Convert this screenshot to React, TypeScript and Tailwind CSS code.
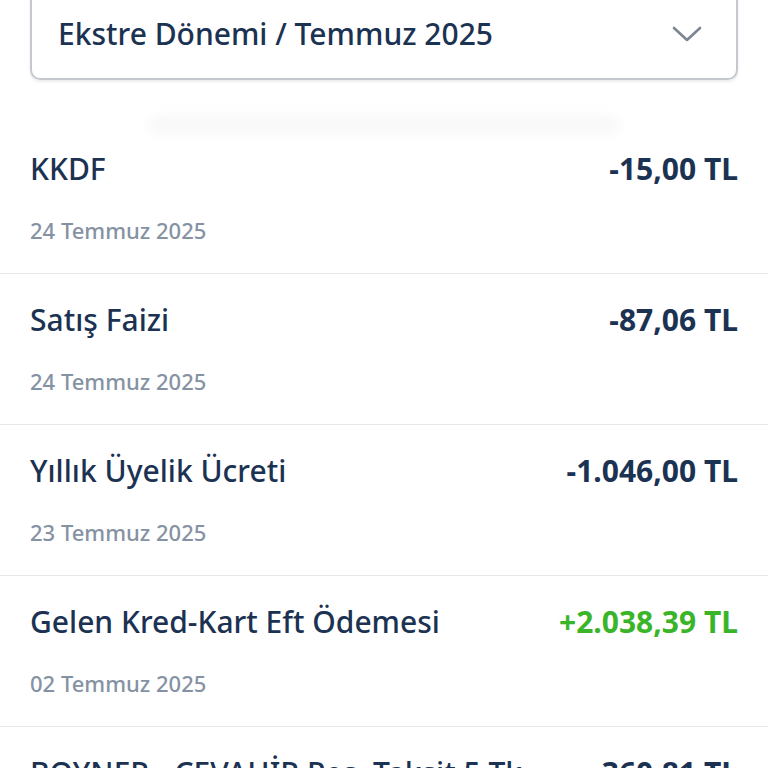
import React from "react";

type Row = { title: string; date: string; amount: string; positive?: boolean };

const rows: Row[] = [
  { title: "KKDF", date: "24 Temmuz 2025", amount: "-15,00 TL" },
  { title: "Satış Faizi", date: "24 Temmuz 2025", amount: "-87,06 TL" },
  { title: "Yıllık Üyelik Ücreti", date: "23 Temmuz 2025", amount: "-1.046,00 TL" },
  { title: "Gelen Kred-Kart Eft Ödemesi", date: "02 Temmuz 2025", amount: "+2.038,39 TL", positive: true },
  { title: "BOYNER - CEVAHİR Peş. Taksit 5 Tk", date: "01 Temmuz 2025", amount: "-360,81 TL" },
];

export default function App() {
  return (
    <div
      className="w-[768px] h-[768px] overflow-hidden bg-white"
      style={{ fontFamily: '"Noto Sans", "Open Sans", sans-serif' }}
    >
      <div className="px-[30px] -mt-[12px]">
        <div className="h-[92px] border-2 border-[#c5c9cf] rounded-[10px] flex items-center justify-between pl-[26px] pr-[34px] shadow-[0_2px_3px_rgba(0,0,0,0.08)]">
          <span className="text-[30px] leading-[40px] font-medium text-[#1b3252]">Ekstre Dönemi / Temmuz 2025</span>
          <svg width="30" height="18" viewBox="0 0 30 18" fill="none">
            <path d="M2 3 L15 15 L28 3" stroke="#7d8593" strokeWidth="2.6" strokeLinecap="round" strokeLinejoin="round" />
          </svg>
        </div>
      </div>
      <div className="h-[43px] flex items-end justify-center">
        <div className="relative top-[10px] w-[470px] h-[16px] bg-[#f7f7f7] blur-[6px] rounded-full" />
      </div>
      <div className="relative flex flex-col">
        {rows.map((r, i) => (
          <div key={i} className="border-b border-[#e6e8eb] px-[30px] pt-[26px] pb-[28px]">
            <div className="flex items-center justify-between">
              <span className="text-[30px] leading-[40px] font-medium text-[#1b3252] whitespace-nowrap">{r.title}</span>
              <span
                className={
                  "text-[30px] leading-[40px] font-bold whitespace-nowrap " +
                  (r.positive ? "text-[#3ab52a]" : "text-[#1b3252]")
                }
              >
                {r.amount}
              </span>
            </div>
            <div className="mt-[26px] text-[22px] leading-[30px] font-medium text-[#8592a3]">{r.date}</div>
          </div>
        ))}
      </div>
    </div>
  );
}
